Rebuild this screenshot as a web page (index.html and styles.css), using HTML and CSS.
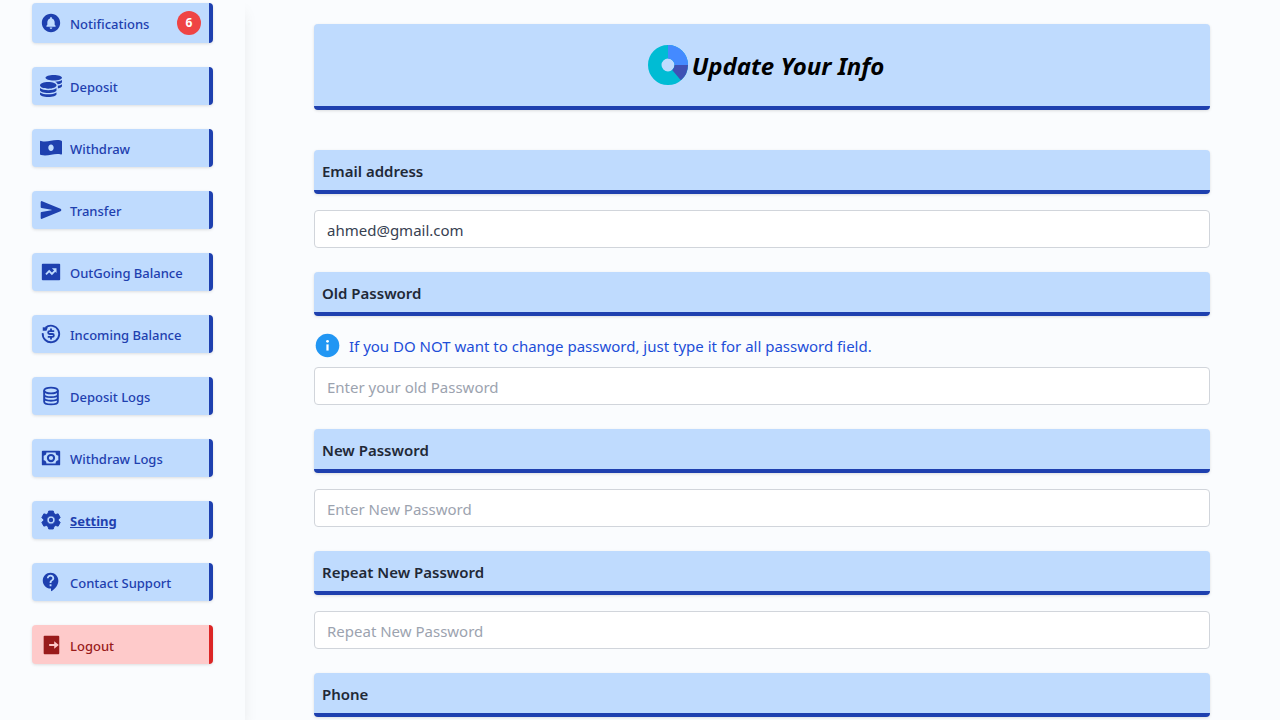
FILE: index.html
```html
<!DOCTYPE html>
<html lang="en">
<head>
<meta charset="utf-8">
<meta name="viewport" content="width=device-width, initial-scale=1">
<title>Update Your Info</title>
<link rel="stylesheet" href="styles.css">
</head>
<body>
<div class="layout">
  <nav class="sidebar" aria-label="Account">
    <a class="item" href="#">
      <svg class="icon" viewBox="0 0 24 24"><path d="M12 2C6.48 2 2 6.48 2 12s4.48 10 10 10 10-4.48 10-10S17.52 2 12 2zm0 16.5c-.83 0-1.5-.67-1.5-1.5h3c0 .83-.67 1.5-1.5 1.5zm5-2.5H7v-1l1-1v-2.61C8 9.27 9.03 7.47 11 7v-.5c0-.57.43-1 1-1s1 .43 1 1V7c1.97.47 3 2.28 3 4.39V14l1 1v1z"/></svg>
      <span>Notifications</span><span class="badge">6</span>
    </a>
    <a class="item" href="#">
      <svg class="icon" viewBox="0 0 512 512"><path d="M0 405.3V448c0 35.3 86 64 192 64s192-28.7 192-64v-42.7C342.7 434.4 267.2 448 192 448S41.3 434.4 0 405.3zM320 128c106 0 192-28.7 192-64S426 0 320 0 128 28.7 128 64s86 64 192 64zM0 300.4V352c0 35.3 86 64 192 64s192-28.7 192-64v-51.6c-41.3 34-116.9 51.6-192 51.6S41.3 334.4 0 300.4zm416 11c57.3-11.1 96-31.7 96-55.4v-42.7c-23.2 16.4-57.3 27.6-96 34.5v63.6zM192 160C86 160 0 195.8 0 240s86 80 192 80 192-35.8 192-80-86-80-192-80zm219.3 56.3c60-10.8 100.7-32 100.7-56.3v-42.7c-35.5 25.1-96.5 38.6-160.7 41.8 29.5 14.3 51.2 33.5 60 57.2z"/></svg>
      <span>Deposit</span>
    </a>
    <a class="item" href="#">
      <svg class="icon" viewBox="0 0 22 22"><path fill-rule="evenodd" d="M0 4.600Q0 3.600 1 3.900C8 5.800 13 1.800 21 3.400Q22 3.600 22 4.500V16.700Q22 17.700 21 17.400C14 15.600 9 19.600 1 18Q0 17.800 0 16.900ZM11 7.500C9.400 7.500 8.300 9 8.300 10.800S9.400 14.100 11 14.100 13.700 12.600 13.700 10.800 12.600 7.500 11 7.500Z"/></svg>
      <span>Withdraw</span>
    </a>
    <a class="item" href="#">
      <svg class="icon" viewBox="0 0 512 512"><path d="M476.590 227.050l-.16-.07L49.350 49.840A23.560 23.560 0 0027.140 52 24.650 24.650 0 0016 72.590v113.290a24 24 0 0019.520 23.570l232.930 43.070a4 4 0 010 7.860L35.530 303.450A24 24 0 0016 327v113.310A23.570 23.570 0 0026.590 460a23.940 23.940 0 0013.220 4 24.550 24.550 0 009.520-1.930L476.400 285.940l.19-.09a32 32 0 000-58.800z"/></svg>
      <span>Transfer</span>
    </a>
    <a class="item" href="#">
      <svg class="icon" viewBox="0 0 24 24"><path d="M3 3h18a1 1 0 0 1 1 1v16a1 1 0 0 1-1 1H3a1 1 0 0 1-1-1V4a1 1 0 0 1 1-1z"/><path class="cut" d="M6.500 14.500l3.500-3.500 3 3 4-4"/><path class="arrow" d="M13 8h5v5z"/></svg>
      <span>OutGoing Balance</span>
    </a>
    <a class="item" href="#">
      <svg class="icon" viewBox="0 0 24 24"><g class="line"><path d="M6 5.200A9 9 0 1 1 3 11"/><path d="M15.500 8.800H10.500a1.600 1.600 0 0 0 0 3.200h3a1.600 1.600 0 0 1 0 3.200H8.500M12 6v2.800M12 15.200V18"/></g><path d="M3 4.500 8.500 5 7 8.500 3 8.500z"/></svg>
      <span>Incoming Balance</span>
    </a>
    <a class="item" href="#">
      <svg class="icon" viewBox="0 0 24 24"><g class="line"><ellipse cx="12" cy="6" rx="7.500" ry="3.200"/><path d="M4.500 6v12c0 1.800 3.300 3.200 7.500 3.200s7.500-1.400 7.500-3.200V6M4.500 10c0 1.800 3.300 3.200 7.500 3.200s7.500-1.400 7.500-3.200M4.500 14c0 1.800 3.300 3.200 7.500 3.200s7.500-1.400 7.500-3.200"/></g></svg>
      <span>Deposit Logs</span>
    </a>
    <a class="item" href="#">
      <svg class="icon" viewBox="0 0 24 24"><path fill-rule="evenodd" d="M3 4h18q1 0 1 1v14q0 1-1 1H3q-1 0-1-1V5q0-1 1-1zM7 6A3.500 3.500 0 0 1 4 9.500v5A3.500 3.500 0 0 1 7 18h10a3.500 3.500 0 0 1 3-3.500v-5A3.500 3.500 0 0 1 17 6zM12 7.500a4.500 4.500 0 1 1 0 9 4.500 4.500 0 0 1 0-9zM12 9.700a2.300 2.300 0 1 0 0 4.600 2.300 2.300 0 0 0 0-4.600z"/></svg>
      <span>Withdraw Logs</span>
    </a>
    <a class="item active" href="#" aria-current="page">
      <svg class="icon" viewBox="0 0 24 24"><path fill-rule="evenodd" stroke="currentColor" stroke-linejoin="round" d="M9.500 2.200h5l.8 2.800 1.800 1 2.700-.7 2.200 4-1.900 2.100v1.200l1.900 2.100-2.200 4-2.700-.7-1.800 1-.8 2.800h-5L8.700 19l-1.800-1-2.700.7-2.200-4 1.900-2.100v-1.200L2 9.300l2.200-4 2.700.7 1.800-1zM12 7.500a4.500 4.500 0 1 0 0 9 4.500 4.500 0 0 0 0-9z"/><circle cx="12" cy="12" r="2.400"/></svg>
      <span>Setting</span>
    </a>
    <a class="item" href="#">
      <svg class="icon" viewBox="0 0 24 24"><path d="M11.500 2C6.810 2 3 5.810 3 10.500S6.810 19 11.500 19h.5v3c4.860-2.340 8-7 8-11.500C20 5.810 16.190 2 11.500 2zm1 14.500h-2v-2h2v2zm0-3.500h-2c0-3.250 3-3 3-5 0-1.100-.9-2-2-2s-2 .9-2 2h-2c0-2.210 1.790-4 4-4s4 1.790 4 4c0 2.500-3 2.750-3 5z"/></svg>
      <span>Contact Support</span>
    </a>
    <button class="item logout" type="button">
      <svg class="icon" viewBox="0 0 24 24"><path d="M5 2h15q1 0 1 1v18q0 1-1 1H5q-1 0-1-1V3q0-1 1-1z"/><path class="arrow" d="M10 11h5.500V8l5 4-5 4v-3H10z"/></svg>
      <span>Logout</span>
    </button>
  </nav>
  <main class="main">
    <header class="banner">
      <svg class="pie" viewBox="0 0 40 40"><g fill="none" stroke-width="13.500"><circle cx="20" cy="20" r="13.250" stroke="#00bcd4"/><path d="M20 6.750A13.250 13.250 0 0 1 33.250 20" stroke="#448aff"/><path d="M33.250 20A13.250 13.250 0 0 1 28.500 30.160" stroke="#3f51b5"/></g></svg>
      <h1>Update Your Info</h1>
    </header>
    <form class="form">
      <div class="field">
        <label for="email">Email address</label>
        <input id="email" type="email" value="ahmed@gmail.com">
      </div>
      <div class="field hinted">
        <label for="old">Old Password</label>
        <p class="hint" id="old-hint"><svg class="info" viewBox="0 0 48 48"><circle cx="24" cy="24" r="21" fill="#2196f3"/><path fill="#fff" d="M22 22h4v11h-4z"/><circle cx="24" cy="16.500" r="2.500" fill="#fff"/></svg>If you DO NOT want to change password, just type it for all password field.</p>
        <input id="old" type="password" placeholder="Enter your old Password" aria-describedby="old-hint">
      </div>
      <div class="field">
        <label for="new">New Password</label>
        <input id="new" type="password" placeholder="Enter New Password">
      </div>
      <div class="field">
        <label for="repeat">Repeat New Password</label>
        <input id="repeat" type="password" placeholder="Repeat New Password">
      </div>
      <div class="field">
        <span class="label">Phone</span>
      </div>
    </form>
  </main>
</div>
</body>
</html>
```

FILE: styles.css
```css
* { box-sizing: border-box; }
body {
  margin: 0;
  background: #fafcfe;
  color: #1f2937;
  font: 15px/24px "Noto Sans", "Open Sans", sans-serif;
}
h1, p { margin: 0; }
.layout { display: flex; min-height: 100vh; }
.sidebar {
  flex: 0 0 245px;
  display: flex;
  flex-direction: column;
  gap: 24px;
  padding: 3px 32px 24px;
  box-shadow: 0 10px 15px -3px rgba(0, 0, 0, 0.1);
}
.item {
  display: flex;
  align-items: center;
  gap: 8px;
  min-height: 38px;
  padding: 8px;
  border: 0;
  border-right: 4px solid #1e40af;
  border-radius: 4px;
  background: #bfdbfe;
  box-shadow: 0 1px 3px rgba(0, 0, 0, 0.12);
  color: #1e40af;
  font: 500 13px/20px "Noto Sans", "Open Sans", sans-serif;
  text-align: left;
  text-decoration: none;
}
.item span { padding-top: 2px; }
.active { font-weight: 700; text-decoration: underline; }
.icon { flex: none; width: 22px; height: 22px; fill: currentColor; }
.item .arrow { fill: #bfdbfe; }
.cut { fill: none; stroke: #bfdbfe; stroke-width: 2; }
.line { fill: none; stroke: currentColor; stroke-width: 2; }
.item .badge {
  width: 24px;
  margin-left: auto;
  padding: 0;
  border-radius: 50%;
  background: #ef4444;
  color: #fff;
  font-size: 12px;
  font-weight: 700;
  line-height: 24px;
  text-align: center;
}
.logout { min-height: 39px; border-color: #dc2626; background: #fecaca; color: #991b1b; }
.logout .arrow { fill: #fecaca; }
.main { flex: 1; min-width: 0; padding: 24px 25px 0 24px; }
.banner, .form { max-width: 896px; margin: 0 auto; }
.banner {
  display: flex;
  align-items: center;
  justify-content: center;
  gap: 4px;
  padding: 20px 8px 20px 16px;
  border-bottom: 4px solid #1e40af;
  border-radius: 4px;
  background: #bfdbfe;
  box-shadow: 0 1px 3px rgba(0, 0, 0, 0.12);
}
.banner h1 {
  padding-top: 2px;
  color: #000;
  font: italic 700 24px/40px "Noto Sans", "Open Sans", sans-serif;
}
.pie { width: 40px; height: 40px; }
.form { display: flex; flex-direction: column; gap: 24px; margin-top: 40px; }
.field { display: flex; flex-direction: column; gap: 16px; }
.field label, .label {
  padding: 9px 8px 7px;
  border-bottom: 4px solid #1e40af;
  border-radius: 4px;
  background: #bfdbfe;
  box-shadow: 0 1px 3px rgba(0, 0, 0, 0.12);
  font-weight: 600;
}
.field input {
  width: 100%;
  height: 38px;
  padding: 8px 12px 6px;
  border: 1px solid #d1d5db;
  border-radius: 4px;
  background: #fff;
  color: #374151;
  font: inherit;
}
.field input::placeholder { color: #9ca3af; opacity: 1; }
.hinted { gap: 8px; }
.hint { display: flex; align-items: center; gap: 8px; margin-top: 8px; color: #1d4ed8; }
.info { width: 27px; height: 27px; }
```
